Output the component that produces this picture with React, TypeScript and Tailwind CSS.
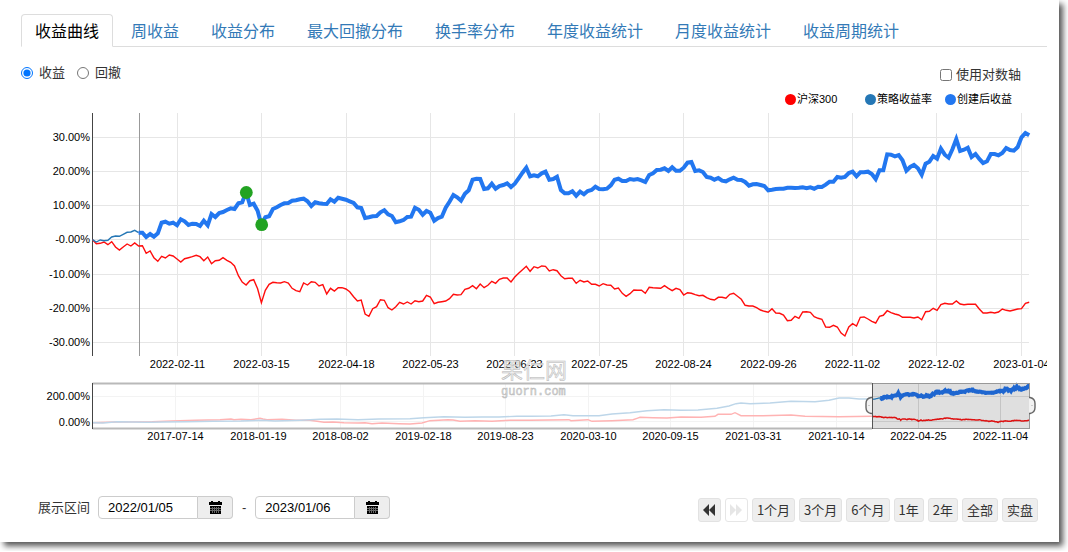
import { useState } from 'react';
import { clsx } from 'clsx';

const TABS = [
  '收益曲线',
  '周收益',
  '收益分布',
  '最大回撤分布',
  '换手率分布',
  '年度收益统计',
  '月度收益统计',
  '收益周期统计',
];

const LEGEND = [
  { label: '沪深300', dot: 'bg-[#ff0000]' },
  { label: '策略收益率', dot: 'bg-[#2577b5]' },
  { label: '创建后收益', dot: 'bg-[#2277f0]' },
];

const RANGES = ['1个月', '3个月', '6个月', '1年', '2年', '全部', '实盘'];

// One sample per trading day, in thirds of a chart unit from the top edge
const STRATEGY = [
  389, 396, 390, 392, 391, 381, 378, 379, 373, 367, 366, 361, 368, 368, 381, 372, 380, 370, 338, 335,
  341, 338, 346, 328, 334, 345, 341, 342, 348, 332, 346, 312, 321, 309, 306, 300, 295, 297, 280, 277,
  247, 285, 281, 302, 344, 322, 319, 297, 292, 285, 280, 279, 272, 271, 268, 266, 274, 288, 277, 280,
  281, 282, 268, 275, 263, 266, 269, 274, 279, 292, 294, 324, 322, 319, 318, 307, 301, 313, 318, 337,
  334, 330, 321, 320, 293, 299, 314, 303, 308, 332, 324, 320, 293, 275, 255, 262, 272, 251, 241, 209,
  206, 207, 237, 235, 221, 236, 228, 225, 220, 231, 221, 205, 188, 173, 199, 196, 199, 190, 185, 209,
  207, 200, 240, 250, 250, 244, 257, 245, 253, 243, 240, 230, 237, 238, 236, 226, 209, 206, 213, 213,
  207, 209, 207, 211, 216, 195, 190, 180, 179, 175, 183, 172, 182, 182, 173, 158, 156, 183, 181, 186,
  201, 203, 209, 204, 212, 214, 208, 203, 209, 210, 216, 227, 223, 222, 225, 228, 241, 239, 237, 236,
  236, 233, 233, 234, 233, 232, 235, 232, 236, 230, 231, 224, 215, 215, 201, 203, 201, 189, 185, 199,
  187, 187, 185, 192, 207, 181, 181, 133, 134, 139, 135, 151, 182, 171, 165, 175, 194, 161, 155, 138,
  146, 116, 134, 143, 118, 87, 123, 119, 113, 141, 132, 147, 159, 154, 132, 132, 136, 129, 114, 120,
  122, 111, 82, 69, 76,
];

const BENCHMARK = [
  389, 401, 400, 396, 404, 395, 411, 420, 411, 402, 408, 399, 408, 407, 430, 423, 443, 454, 439, 444,
  435, 438, 447, 456, 446, 443, 440, 436, 440, 452, 441, 461, 452, 451, 443, 451, 457, 468, 497, 516,
  525, 512, 509, 536, 578, 541, 523, 517, 518, 519, 515, 519, 535, 542, 545, 519, 525, 515, 517, 528,
  524, 552, 535, 543, 533, 533, 537, 545, 560, 573, 570, 612, 619, 596, 590, 569, 571, 593, 600, 590,
  577, 582, 576, 582, 572, 575, 573, 556, 561, 581, 577, 575, 573, 566, 553, 555, 554, 538, 535, 527,
  536, 522, 533, 526, 514, 520, 508, 504, 504, 516, 501, 490, 479, 469, 484, 470, 474, 468, 469, 483,
  479, 482, 497, 506, 505, 505, 520, 511, 516, 513, 523, 523, 528, 521, 525, 526, 537, 534, 550, 559,
  551, 540, 541, 541, 550, 532, 533, 534, 535, 527, 535, 542, 535, 539, 555, 548, 550, 554, 557, 556,
  563, 568, 570, 562, 562, 565, 553, 550, 559, 568, 586, 588, 588, 593, 600, 604, 607, 596, 609, 610,
  615, 632, 631, 619, 625, 606, 605, 607, 620, 625, 628, 651, 652, 646, 651, 669, 678, 651, 641, 648,
  622, 621, 627, 634, 639, 619, 616, 602, 608, 612, 615, 622, 622, 622, 624, 621, 629, 605, 604, 595,
  601, 584, 580, 582, 582, 573, 582, 584, 583, 583, 583, 597, 609, 609, 607, 609, 606, 597, 601, 603,
  600, 597, 596, 580, 577,
];

const PLOT_LEFT = 71.5;
const DAY = 3.839;
const CREATED = 12; // index of the day the strategy was created

const VALUE_TICKS = [
  { label: '30.00%', y: 27.5 },
  { label: '20.00%', y: 61.5 },
  { label: '10.00%', y: 95.5 },
  { label: '-0.00%', y: 129.5 },
  { label: '-10.00%', y: 164.5 },
  { label: '-20.00%', y: 198.5 },
  { label: '-30.00%', y: 232.5 },
];

const DATE_TICKS = [
  { label: '2022-02-11', x: 156.5 },
  { label: '2022-03-15', x: 240.5 },
  { label: '2022-04-18', x: 325.5 },
  { label: '2022-05-23', x: 409.5 },
  { label: '2022-06-23', x: 493.5 },
  { label: '2022-07-25', x: 578.5 },
  { label: '2022-08-24', x: 662.5 },
  { label: '2022-09-26', x: 747.5 },
  { label: '2022-11-02', x: 831.5 },
  { label: '2022-12-02', x: 915.5 },
  { label: '2023-01-04', x: 1000.5 },
];

const OVERVIEW_TICKS = [
  { label: '2017-07-14', x: 154.5 },
  { label: '2018-01-19', x: 237.5 },
  { label: '2018-08-02', x: 319.5 },
  { label: '2019-02-18', x: 402.5 },
  { label: '2019-08-23', x: 484.5 },
  { label: '2020-03-10', x: 567.5 },
  { label: '2020-09-15', x: 649.5 },
  { label: '2021-03-31', x: 732.5 },
  { label: '2021-10-14', x: 815.5 },
  { label: '2022-04-25', x: 897.5 },
  { label: '2022-11-04', x: 979.5 },
];

const OVERVIEW_STRATEGY =
  '72,312.7 82,313 96,311.7 127,312.3 141,312 165,311.7 192,311.3 220,311 241,310.3 254,311 279,310.3 299,309.3 316,309 337,309.7 358,309 389,308.7 403,307.7 423,306.7 444,307.3 461,307 478,307 496,306.3 509,306.3 530,306 543,304.7 552,305.7 578,305.7 591,304 609,302.7 626,300.7 643,299.7 660,300.3 677,300 696,298.3 708,296 715,293.7 720,293 729,293.7 749,293 770,291.3 794,291.7 808,290.3 818,288 828,288 838,289 851,289';

const OVERVIEW_BENCHMARK =
  '72,312.7 96,312 131,311.7 151,311 175,310.3 199,309.7 210,309 213,309.7 220,309.3 230,309.7 239,308.3 242,309 246,309.7 261,309.3 275,310.3 289,310.3 303,312.3 312,312 323,312.7 337,313 344,312.7 351,313.7 361,313 378,313.7 389,314 401,313 409,310.7 427,309.7 432,310 439,311.3 454,310.7 471,311.3 489,310.3 509,310.3 548,309.7 550,310.7 567,309.7 571,311.3 591,310.7 612,309.7 616,308.3 619,307.3 632,307.7 646,308 660,307 680,307.3 694,306.3 697,304.3 710,304.3 714,302.7 720,305.7 742,305.7 770,305 784,306.3 818,306.7 851,306.3';

function mainPoints(series: number[], from = 0, to = series.length): string {
  return series
    .slice(from, to)
    .map((v, i) => `${(PLOT_LEFT + (from + i) * DAY).toFixed(1)},${(v / 3).toFixed(1)}`)
    .join(' ');
}

function overviewPoints(series: number[], base: number, scale: number, from = 0): string {
  const step = 156.5 / (series.length - 1);
  return series
    .slice(from)
    .map((v, i) => `${(851.5 + (from + i) * step).toFixed(1)},${(base + (v - 389) * scale).toFixed(1)}`)
    .join(' ');
}

function MainChart() {
  return (
    <g>
      {VALUE_TICKS.map((t) => (
        <g key={t.label}>
          <line x1={72} x2={1008} y1={t.y} y2={t.y} stroke="#e6e6e6" />
          <text x={69} y={t.y + 3.5} textAnchor="end">{t.label}</text>
        </g>
      ))}
      {DATE_TICKS.map((t) => (
        <g key={t.label}>
          <line x1={t.x} x2={t.x} y1={3} y2={246} stroke="#e6e6e6" />
          <text x={t.x} y={258} textAnchor="middle">{t.label}</text>
        </g>
      ))}
      <line x1={71.5} x2={71.5} y1={3} y2={246} stroke="#444" />
      <line x1={118.5} x2={118.5} y1={3} y2={246} stroke="#999" />
      <polyline points={mainPoints(BENCHMARK)} fill="none" stroke="#ff0d0d" strokeWidth={1.4} />
      <polyline points={mainPoints(STRATEGY, 0, CREATED + 1)} fill="none" stroke="#2577b5" strokeWidth={1.4} />
      <polyline points={mainPoints(STRATEGY, CREATED)} fill="none" stroke="#2277f0" strokeWidth={4} />
      <circle cx={225.3} cy={82.5} r={6.4} fill="#22a322" />
      <circle cx={240.7} cy={114.7} r={6.4} fill="#22a322" />
    </g>
  );
}

function Watermark() {
  return (
    <g fill="#ececec" fillOpacity={0.85} stroke="#b8b8b8" strokeWidth={0.5}>
      <text x={480} y={268} fontSize={22}>果仁网</text>
      <text x={480} y={285} fontSize={12} fill="#d8d8d8" className="font-['Liberation_Mono',monospace]">
        guorn.com
      </text>
    </g>
  );
}

function Handle({ x, side }: { x: number; side: 'left' | 'right' }) {
  const d = side === 'left' ? 'M0 -8 h-1 q-5 1 -5 6 v4 q0 5 5 6 h1' : 'M0 -8 h1 q5 1 5 6 v4 q0 5 -5 6 h-1';
  return (
    <g transform={`translate(${x} 295.5)`}>
      <path d={d} fill="#f2f2f2" stroke="#666" strokeWidth={1.4} />
      <line x1={side === 'left' ? -4 : 2} x2={side === 'left' ? -2 : 4} y1={0} y2={0} stroke="#ccc" />
    </g>
  );
}

function Overview() {
  return (
    <g>
      <line x1={72} x2={851} y1={286.5} y2={286.5} stroke="#f3f3f3" />
      <line x1={72} x2={851} y1={311.5} y2={311.5} stroke="#f3f3f3" />
      <rect x={851.5} y={273.5} width={157} height={45} fill="#dfdfdf" />
      <line x1={852} x2={1008} y1={286.5} y2={286.5} stroke="#c8c8c8" />
      <line x1={852} x2={1008} y1={311.5} y2={311.5} stroke="#c8c8c8" />
      <text x={69} y={290} textAnchor="end">200.00%</text>
      <text x={69} y={316} textAnchor="end">0.00%</text>
      {OVERVIEW_TICKS.map((t) => (
        <g key={t.label}>
          <line x1={t.x} x2={t.x} y1={274} y2={318} stroke={t.x > 852 ? '#c4c4c4' : '#f3f3f3'} />
          <text x={t.x} y={330} textAnchor="middle">{t.label}</text>
        </g>
      ))}
      <polyline points={OVERVIEW_BENCHMARK} fill="none" stroke="#ffb3b3" strokeWidth={1.4} />
      <polyline points={OVERVIEW_STRATEGY} fill="none" stroke="#bdd6e9" strokeWidth={1.4} />
      <path d="M851 273.5 H71.5 M71.5 318.5 H851" fill="none" stroke="#b9b9b9" strokeWidth={2} />
      <line x1={71.5} x2={71.5} y1={273} y2={319} stroke="#444" />
      <polyline points={overviewPoints(BENCHMARK, 306.3, 0.021)} fill="none" stroke="#dd1111" strokeWidth={1.5} />
      <polyline points={overviewPoints(STRATEGY, 289, 0.0405)} fill="none" stroke="#2577b5" strokeWidth={1.2} />
      <polyline points={overviewPoints(STRATEGY, 289, 0.0405, CREATED)} fill="none" stroke="#1e66d0" strokeWidth={4} />
      <rect x={851.5} y={273.5} width={157} height={45} fill="none" stroke="#999" />
      <line x1={851.5} x2={851.5} y1={273} y2={319} stroke="#555" />
      <Handle x={851} side="left" />
      <Handle x={1008} side="right" />
    </g>
  );
}

function CalendarIcon() {
  return (
    <svg viewBox="0 0 13 14" className="h-[14px] w-[13px]" shapeRendering="crispEdges" aria-hidden="true">
      <path d="M0 1h2V0h2v1h5V0h2v1h2v3H0z" />
      <path d="M1 5h11v8H1z" />
      <path d="M3.5 6v6M5.5 6v6M7.5 6v6M9.5 6v6M1 7.5h11M1 9.5h11" stroke="#666" strokeWidth="1" fill="none" />
    </svg>
  );
}

function DateField({ label, initial }: { label: string; initial: string }) {
  const [value, setValue] = useState(initial);
  return (
    <div className="flex h-[23px]">
      <input
        type="text"
        aria-label={label}
        value={value}
        onChange={(e) => setValue(e.target.value)}
        className="w-[100px] rounded-l-[4px] border border-[#ccc] bg-white px-[9px] text-[13px] leading-5 text-black"
      />
      <button
        type="button"
        aria-label={label}
        className="flex w-[35px] items-center justify-center rounded-r-[4px] border border-l-0 border-[#ccc] bg-[#eee]"
      >
        <CalendarIcon />
      </button>
    </div>
  );
}

export default function App() {
  const [tab, setTab] = useState(TABS[0]);
  const [mode, setMode] = useState('收益');
  const [log, setLog] = useState(false);

  return (
    <div className="bg-white pr-[9px] pb-[9px] font-['Liberation_Sans','Noto_Sans_CJK_SC',sans-serif] text-[13px] text-[#333]">
      <main className="bg-white pt-[14px] pr-3 pb-5 pl-[21px] shadow-[4px_4px_6px_0px_#555]">
        <nav className="flex gap-1 border-b border-[#ddd] text-base">
          {TABS.map((t) => (
            <a
              key={t}
              href="#"
              onClick={() => setTab(t)}
              className={clsx(
                '-mb-px h-[33px] rounded-t-[4px] border px-[13px] leading-[34px] whitespace-nowrap',
                t === tab ? 'border-[#ddd] border-b-white bg-white text-black' : 'border-transparent text-[#337ab7]'
              )}
            >
              {t}
            </a>
          ))}
        </nav>

        <div className="flex items-center justify-between pt-[14px] pr-[26px]">
          <div className="flex gap-3">
            {['收益', '回撤'].map((m) => (
              <label key={m} className="flex items-center gap-[6px] leading-5">
                <input
                  type="radio"
                  name="mode"
                  checked={mode === m}
                  onChange={() => setMode(m)}
                  className="size-3"
                />
                {m}
              </label>
            ))}
          </div>
          <label className="flex items-center gap-1 pt-1 leading-5">
            <input type="checkbox" checked={log} onChange={(e) => setLog(e.target.checked)} className="size-3" />
            使用对数轴
          </label>
        </div>

        <ul className="flex justify-end pt-1 pr-[22px] pb-px text-[11px] leading-5 text-black">
          {LEGEND.map((item) => (
            <li key={item.label} className="flex w-20 items-center gap-px whitespace-nowrap">
              <span className={clsx('size-[11px] rounded-full', item.dot)} />
              {item.label}
            </li>
          ))}
        </ul>

        <svg
          viewBox="0 0 1026 340"
          className="block w-full fill-black text-[11px]"
          role="img"
          aria-label="收益曲线"
        >
          <MainChart />
          <Overview />
          <Watermark />
        </svg>

        <div className="flex items-start justify-between pt-[46px] pr-[9px] pl-[17px]">
          <div className="flex items-center gap-2">
            <span>展示区间</span>
            <DateField label="开始日期" initial="2022/01/05" />
            <span className="px-px">-</span>
            <DateField label="结束日期" initial="2023/01/06" />
          </div>
          <div className="flex items-center gap-1 pt-[2px] font-['Noto_Sans_CJK_SC',sans-serif]">
            <button
              type="button"
              aria-label="后退"
              className="flex h-6 w-[23px] items-center justify-center rounded-[3px] border border-[#e2e2e2] bg-[#eee]"
            >
              <svg viewBox="0 0 12 12" className="size-3 fill-[#333]" aria-hidden="true">
                <path d="M6 0v12L0 6zM12 0v12L6 6z" />
              </svg>
            </button>
            <button
              type="button"
              aria-label="前进"
              disabled
              className="flex h-6 w-[23px] items-center justify-center rounded-[3px] border border-[#e6e6e6] bg-white"
            >
              <svg viewBox="0 0 12 12" className="size-3 fill-[#e6e6e6]" aria-hidden="true">
                <path d="M0 0v12l6-6zM6 0v12l6-6z" />
              </svg>
            </button>
            {RANGES.map((r) => (
              <button
                key={r}
                type="button"
                className="h-6 rounded-[3px] border border-[#e2e2e2] bg-[#eee] px-1 leading-5 whitespace-nowrap"
              >
                {r}
              </button>
            ))}
          </div>
        </div>
      </main>
    </div>
  );
}
